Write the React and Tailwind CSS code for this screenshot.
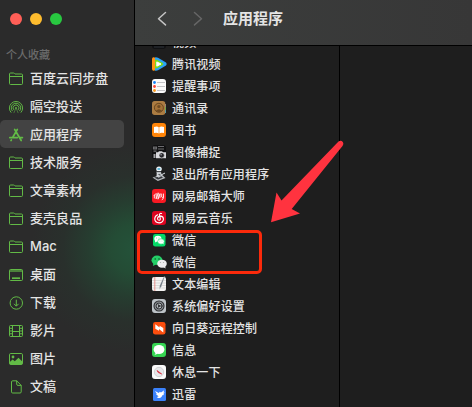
import React from "react";

const Folder = () => (
  <g>
    <path d="M1.500 12.500V3Q1.500 2 2.600 2h3q.6 0 1 .5l.4.500h6.400q1.100 0 1.100 1v8.500q0 1-1.100 1H2.600q-1.100 0-1.100-1z" />
    <path d="M1.500 5.500h13" />
  </g>
);

const AirDrop = () => (
  <g strokeWidth="0.95" transform="translate(0 .6)">
    <path d="M3.200 13A6.600 6.600 0 1 1 12.800 13" />
    <path d="M4.500 11.500A4.700 4.700 0 1 1 11.500 11.500" />
    <path d="M5.900 10.300A2.900 2.900 0 1 1 10.100 10.300" />
    <path d="M8 8.300 5.800 13.500M8 8.300l2.200 5.200" strokeWidth="0.500" />
    <circle cx="8" cy="8.300" r="0.900" fill="#62ba46" stroke="none" />
  </g>
);

const AppStore = () => (
  <g strokeWidth="1.700" strokeLinecap="round">
    <path d="M9.300 2.500 4.900 10M6.700 2.500l6.500 11M1.800 10.600h7.500M12.300 10.600h2.100M3.400 12.900l-.4.700" />
  </g>
);

const Desktop = () => (
  <g>
    <rect x="1.500" y="2.500" width="13" height="11" rx="1" />
    <path d="M1.500 4h13" strokeWidth="2" opacity=".6" />
    <path d="M4 11.200h8" strokeWidth="1.700" />
  </g>
);

const Download = () => (
  <g>
    <circle cx="8.300" cy="8" r="6.200" />
    <path d="M8.300 4.700v6.300M6 8.800l2.300 2.400 2.300-2.400" />
  </g>
);

const Film = () => (
  <g>
    <rect x="1.500" y="2.500" width="13" height="11" rx="1" />
    <path d="M4.500 2.500v11M11.500 2.500v11M4.500 8.500h7" />
    <path d="M1.500 5.300h3M1.500 8h3M1.500 10.800h3M11.500 5.300h3M11.500 8h3M11.500 10.800h3" />
  </g>
);

const Photo = () => (
  <g>
    <rect x="1.500" y="2.500" width="13" height="11" rx="1.300" />
    <circle cx="5" cy="6" r="1.400" fill="#62ba46" stroke="none" />
    <path d="M1.500 11.300 4.600 8.600l2.200 1.700 3.700-3.500 4 4v1.700q0 1-1 1h-11q-1 0-1-1z" fill="#62ba46" stroke="none" />
  </g>
);

const Doc = () => (
  <path d="M3.500 3q0-1.200 1.200-1.200h4l4.500 4.600v6.500q0 1.100-1.200 1.100H4.700q-1.200 0-1.200-1.100zM8.700 1.800v3.400q0 1.200 1.200 1.200h3.300" />
);

const favorites = [
  ["百度云同步盘", Folder],
  ["隔空投送", AirDrop],
  ["应用程序", AppStore],
  ["技术服务", Folder],
  ["文章素材", Folder],
  ["麦壳良品", Folder],
  ["Mac", Folder],
  ["桌面", Desktop],
  ["下载", Download],
  ["影片", Film],
  ["图片", Photo],
  ["文稿", Doc],
];

const Tile = ({ fill, children }) => (
  <g>
    <rect width="14" height="14" rx="3" fill={fill} />
    {children}
  </g>
);

const icons = {
  dark: <Tile fill="#111214"><path d="M2 12h10" stroke="#24292d" strokeWidth="1.500" /></Tile>,
  tencent: (
    <g>
      <path d="M0 2Q0 0 2 .3l4 2v9.400l-4 2Q0 14 0 12z" fill="#ff9417" />
      <path d="M3 .5Q4-.2 6 .8l8 4.700Q15.500 7 14 8.500L6 13.300Q4 14.200 3 13.400z" fill="#2ba2f5" />
      <path d="M3 3q1-.8 2.500 0l5.200 3q1.200 1 0 2L5.500 11Q4 11.800 3 11z" fill="#7bdc18" />
      <path d="M4.800 4.900 9 7 4.800 9.200z" fill="#fff" stroke="#fff" strokeLinejoin="round" />
    </g>
  ),
  reminders: (
    <Tile fill="#fafafa">
      <path d="M5 3.500h8M5 7.500h8M5 11.500h8" stroke="#bcbcbf" strokeWidth=".9" />
      <circle cx="2.500" cy="3.500" r="1.400" fill="#1685fb" />
      <circle cx="2.500" cy="7.500" r="1.400" fill="#fa443a" />
      <circle cx="2.500" cy="11.500" r="1.400" fill="#fb9818" />
    </Tile>
  ),
  contacts: (
    <g>
      <path d="M13 3h1v3h-1z" fill="#8c8c8c" />
      <path d="M13 6h1v3h-1z" fill="#54bb50" />
      <path d="M13 9h1v3h-1z" fill="#30a6d9" />
      <rect width="13.300" height="14" rx="2.700" fill="#ab7c42" />
      <circle cx="6.900" cy="6.800" r="4.500" fill="#a47237" stroke="#694822" />
      <circle cx="6.900" cy="5.500" r="1.600" fill="#6d4a22" />
      <path d="M3.900 9.700q3-3 6 0-3 2.500-6 0z" fill="#6d4a22" />
    </g>
  ),
  books: (
    <Tile fill="#ff8509">
      <path d="M2 4q3-1.300 4.700.2v6.200Q5 9.200 2 10zM12 4q-3-1.300-4.700.2v6.200Q9 9.200 12 10z" fill="#fff" />
    </Tile>
  ),
  capture: (
    <Tile fill="#101011">
      <path d="M1.500 2h3v2h-3zM6 1.500h6M6 4h6M1.500 6.200h3" stroke="#6c6c6f" strokeWidth="1.200" fill="#444" />
      <path d="M1.500 9h2v4h-2z" fill="#9d9da1" />
      <path d="M4 7.200h2l1-1h3l1 1h3v6.100H4z" fill="#d8d8dc" />
      <circle cx="9.700" cy="10.300" r="2.600" fill="#252529" stroke="#eee" strokeWidth=".5" />
      <circle cx="9.100" cy="9.800" r=".8" fill="#a5a5ad" />
    </Tile>
  ),
  quit: (
    <g>
      <path d="M.5 10.500 10 7.800l3.500 3.200-7.700 3.100z" fill="#b5b8bc" />
      <path d="m2 10.600 7-1.500 2 1.700-5 1.800z" fill="#383a3e" />
      <path d="m4.800 4 4 .3 1.100 4.400-3.200 2-2.200-1.600z" fill="#c7cace" />
      <ellipse cx="7" cy="2.100" rx="2.800" ry="2.500" fill="#eff3f6" />
      <path d="M5.500 2h2.800" stroke="#149bcc" strokeWidth="1.300" />
      <path d="m9 8 4-2M5 5.500l1.500 2.300-2 2.300" stroke="#dce0e4" fill="none" />
      <path d="M5 4.600h4M6.500 7.500l2 .5" stroke="#33363b" />
    </g>
  ),
  mail: (
    <Tile fill="#f91923">
      <path d="M2.300 9V6.300M4.200 9.500V4.600M6.100 9.800V4M8 8.500V5M9.700 5v3q.8 1 1.800 0V5M11.500 8q0 2.600-1.300 2.800M2.300 6.300l1-1.200M4.200 9.500l1.900-5M6.100 9.800 8 5" stroke="#fff" strokeWidth=".85" fill="none" strokeLinecap="round" />
    </Tile>
  ),
  music: (
    <Tile fill="#dd0420">
      <path d="M9.600 2.500Q7.300 1.900 7.500 4l.8 3.600q.2 1.600-1.300 1.600-1.600-.1-1.500-1.800Q5.900 5.200 8.500 5.100q3 .2 3 3.100-.6 3.700-4.400 3.700Q3 11.500 2.700 7.900q.1-3 3-4.200" stroke="#fff" strokeWidth="1.100" fill="none" strokeLinecap="round" />
    </Tile>
  ),
  wechat: (
    <g>
      <rect x="1" y="1" width="12.500" height="12.500" rx="2.300" fill="#04d967" />
      <ellipse cx="5.900" cy="5.800" rx="3.600" ry="3" fill="#fff" />
      <path d="m3.300 7.500-.4 2 2.200-1z" fill="#fff" />
      <ellipse cx="9" cy="8.500" rx="3.300" ry="2.700" fill="#fff" stroke="#04d967" strokeWidth=".6" />
      <path d="m10 10 1.500.2.300 1.400z" fill="#fff" />
      <circle cx="4.700" cy="5" r=".45" fill="#04b956" />
      <circle cx="7" cy="5" r=".45" fill="#04b956" />
      <circle cx="7.900" cy="8" r=".4" fill="#48c77d" />
      <circle cx="10" cy="8" r=".4" fill="#48c77d" />
    </g>
  ),
  wechatOld: (
    <g>
      <ellipse cx="5" cy="5.300" rx="5.500" ry="4.700" fill="#24ce67" />
      <path d="m1.500 8-.6 3 3.200-1.400z" fill="#24ce67" />
      <ellipse cx="10" cy="8.700" rx="4.800" ry="4" fill="#ececed" />
      <path d="m11 12 2.600 1.500-.5-2.500z" fill="#ececed" />
      <circle cx="3.200" cy="4" r=".8" fill="#0d582b" />
      <circle cx="7" cy="4" r=".8" fill="#0d582b" />
      <circle cx="8.500" cy="7.500" r=".6" fill="#aaa" />
      <circle cx="11.500" cy="7.500" r=".6" fill="#aaa" />
    </g>
  ),
  text: (
    <g>
      <rect width="14" height="14" rx="2" fill="#f4f4f3" />
      <path d="M0 3.500h14M0 6h14M0 8.500h14M0 11h14" stroke="#c8c8c8" strokeWidth=".6" />
      <path d="M2.800 0v14" stroke="#e57068" strokeWidth=".7" />
      <path d="m12.700-.3-3.200 9.500-2.200 3.500.3-4L11.600 0z" fill="#68727c" stroke="#f8f8f8" strokeWidth=".4" />
    </g>
  ),
  settings: (
    <Tile fill="#bdc3c8">
      <circle cx="7" cy="7" r="5" fill="#909499" stroke="#2e3033" strokeWidth="1.100" />
      <circle cx="7" cy="7" r="3" fill="#b3b7bb" stroke="#313336" />
      <path d="M7 7h4M7 7 5 3.600M7 7l-2 3.400" stroke="#333539" strokeWidth=".9" />
      <circle cx="7" cy="7" r="1" fill="#292b2e" />
    </Tile>
  ),
  sunflower: (
    <g>
      <rect x="1" y="1" width="12.500" height="12.500" rx="2.300" fill="#fc4e0e" />
      <path d="M3.300 3.200 7.600 6.600V4.800L11.300 7v4.500L7 8v1.800L3.300 7.800z" fill="#fff" />
    </g>
  ),
  messages: (
    <Tile fill="#36d552">
      <ellipse cx="7" cy="6.500" rx="5.400" ry="4.500" fill="#fff" />
      <path d="M3.500 9q.2 2-1 2.700 2.300.1 3.200-1.400z" fill="#fff" />
    </Tile>
  ),
  rest: (
    <Tile fill="#fafafa">
      <circle cx="7" cy="7" r="4.700" fill="#e6e7e9" stroke="#c9c9cc" strokeWidth=".8" />
      <path d="m5 5.500 4.700 3.500-3.500-1.500z" stroke="#d93645" strokeWidth=".8" fill="#d93645" />
    </Tile>
  ),
  xunlei: (
    <g>
      <rect x="1" y="1" width="13" height="13" rx="1.500" fill="#3b82fb" />
      <path d="m3 4 3.800 2 1-1.200 1.200.7L12.200 3.300l-.7 2.200h1.300l-1.500 1.500.7.900-1.700.3q-.8 3.400-5.600 2.800l2-1.400-1.500-.3.700-1-1.900-.5.800-.7z" fill="#fff" />
    </g>
  ),
};

const apps = [
  ["视频", "dark"],
  ["腾讯视频", "tencent"],
  ["提醒事项", "reminders"],
  ["通讯录", "contacts"],
  ["图书", "books"],
  ["图像捕捉", "capture"],
  ["退出所有应用程序", "quit"],
  ["网易邮箱大师", "mail"],
  ["网易云音乐", "music"],
  ["微信", "wechat"],
  ["微信", "wechatOld"],
  ["文本编辑", "text"],
  ["系统偏好设置", "settings"],
  ["向日葵远程控制", "sunflower"],
  ["信息", "messages"],
  ["休息一下", "rest"],
  ["迅雷", "xunlei"],
];

export default function App() {
  return (
    <div className="relative flex h-[407px] w-[472px] overflow-hidden bg-[#1e1e1e] font-['Inter','Noto_Sans_CJK_SC',sans-serif] text-[#e4e4e4]">
      <aside className="flex w-[135px] shrink-0 flex-col border-r border-black bg-[#2b2b2b] bg-[radial-gradient(circle_at_136px_249px,#24533a_0px,#244c35_25px,#263d30_48px,#29302c_73px,transparent_105px)]">
        <div className="flex gap-2 pt-[13px] pl-[10px]">
          <span className="size-3 rounded-full bg-[#ff5f57]" />
          <span className="size-3 rounded-full bg-[#febc2e]" />
          <span className="size-3 rounded-full bg-[#28c840]" />
        </div>
        <h2 className="mt-[21px] h-[18px] pl-[6px] text-[11px] leading-[18px] font-medium text-[#6b6b6b]">个人收藏</h2>
        <nav>
          {favorites.map(([name, Icon]) => (
            <div
              key={name}
              className={
                name === "应用程序"
                  ? "flex h-7 w-[124px] items-center gap-[6px] rounded-[5px] bg-[#434343] pl-2"
                  : "flex h-7 w-[124px] items-center gap-[6px] pl-2"
              }
            >
              <svg viewBox="0 0 16 16" className="mt-px size-4 shrink-0" fill="none" stroke="#62ba46" strokeWidth="1">
                <Icon />
              </svg>
              <span className="text-[13px] leading-7 font-medium tracking-[0.05px] whitespace-nowrap">{name}</span>
            </div>
          ))}
        </nav>
      </aside>

      <main className="flex min-w-0 flex-1 flex-col">
        <header className="flex h-[46px] shrink-0 items-center border-b border-black bg-linear-to-r from-[#3c3e3d] to-[#373737] pb-[7px]">
          <svg viewBox="0 0 50 16" className="ml-[20px] h-4 w-[50px]" fill="none" strokeWidth="1.500" strokeLinecap="round" strokeLinejoin="round">
            <path d="m10.500 1.500-7 6.200 7 6.200" stroke="#c4c4c4" />
            <path d="m39.500 1.500 7 6.200-7 6.200" stroke="#666" />
          </svg>
          <h1 className="ml-[18px] text-[15px] leading-5 font-bold">应用程序</h1>
        </header>
        <div className="flex min-h-0 flex-1">
          <section className="w-[205px] shrink-0 overflow-hidden border-r border-black">
            <ul className="-mt-[14px] flex flex-col">
              {apps.map(([name, icon], i) => (
                <li key={i} className="flex h-[22px] shrink-0 items-center gap-[6px] pl-[17px]">
                  <svg viewBox="0 0 14 14" className="-mt-0.5 size-[14px] shrink-0 overflow-visible">{icons[icon]}</svg>
                  <span className="text-[12px] leading-[22px] font-medium tracking-[0.17px] whitespace-nowrap">{name}</span>
                </li>
              ))}
            </ul>
          </section>
        </div>
      </main>

      <div className="absolute top-[230px] left-[137px] h-[44px] w-[125px] rounded-[5px] border-[3px] border-[#fb2a0b]" />
      <svg viewBox="0 0 74 84" className="absolute top-[140px] left-[270px] h-[84px] w-[74px]">
        <path d="M68.500 1.500Q71-.2 72.800 2q1.200 2-.3 4L21.700 69l8.300 4.500L1 82.200 6.500 52.500l5 8z" fill="#ff333f" />
      </svg>
    </div>
  );
}
